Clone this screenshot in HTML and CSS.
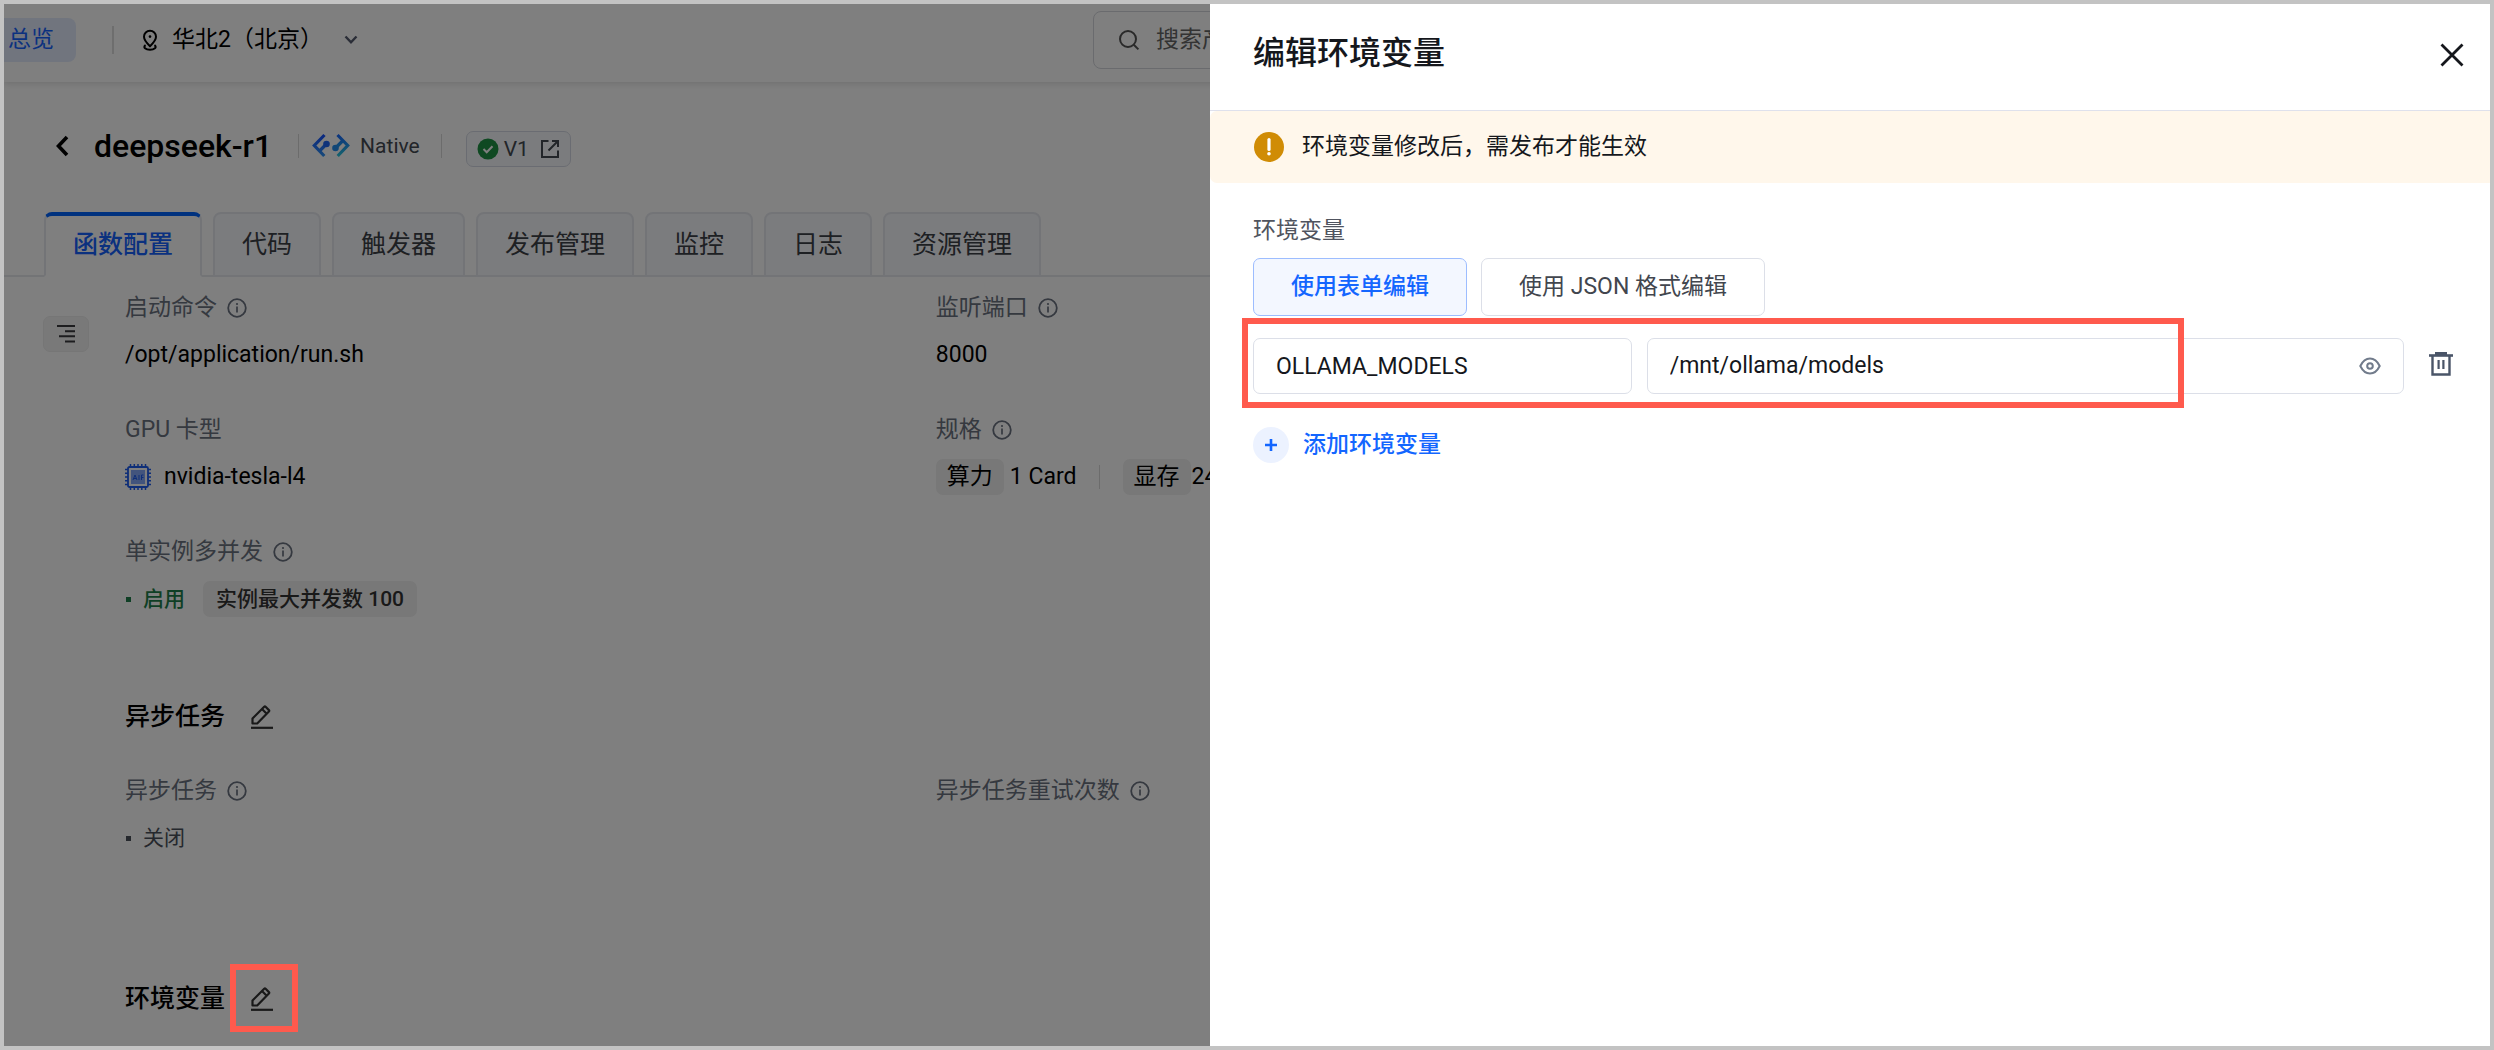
FILE: index.html
```html
<!DOCTYPE html>
<html lang="zh-CN">
<head>
<meta charset="utf-8">
<meta name="viewport" content="width=device-width, initial-scale=1">
<title>编辑环境变量</title>
<link rel="stylesheet" href="styles.css">
</head>
<body>
<svg class="sprite" width="0" height="0" aria-hidden="true">
  <symbol id="info" viewBox="0 0 20 20"><circle cx="10" cy="10" r="8.8" fill="none" stroke="currentColor" stroke-width="1.8"/><path d="M10 8.6v5.8" stroke="currentColor" stroke-width="1.7"/><circle cx="10" cy="6" r="1.1" fill="currentColor"/></symbol>
  <symbol id="edit" viewBox="0 0 22 24"><path d="M1.5 18.5v-5L13.2 1.8a1 1 0 0 1 1.4 0l3.3 3.3a1 1 0 0 1 0 1.4L6.2 18.5zM11 4l4.7 4.7" fill="none" stroke="currentColor" stroke-width="2.2" stroke-linejoin="round"/><path d="M0 22.8h22" stroke="currentColor" stroke-width="2.2"/></symbol>
</svg>
<div class="frame">
  <header class="topbar">
    <div class="topbar-start">
      <a class="overview" href="#">总览</a>
      <button class="region" type="button">
        <svg width="16" height="22" viewBox="0 0 16 22" fill="none" stroke="currentColor" stroke-width="2"><path d="M8 17.2C4 13.4 2 10.8 2 7.8a6 6 0 0 1 12 0c0 3-2 5.600-6 9.400z"/><circle cx="8" cy="7.600" r="1.300" fill="currentColor" stroke="none"/><path d="M3.600 16.200c-3.200 2 .2 4.600 4.400 4.600s7.600-2.600 4.400-4.600"/></svg>
        <span>华北2（北京）</span>
        <svg class="caret" width="14" height="10" viewBox="0 0 14 10" fill="none" stroke="currentColor" stroke-width="2.400"><path d="M1.500 1.500 7 7.300l5.500-5.800"/></svg>
      </button>
    </div>
    <label class="search">
      <svg width="22" height="22" viewBox="0 0 22 22" fill="none" stroke="currentColor" stroke-width="2"><circle cx="10" cy="10" r="8"/><path d="m15.800 15.800 4.600 4.600"/></svg>
      <input type="search" placeholder="搜索产" aria-label="搜索">
    </label>
  </header>

  <main class="page">
    <div class="title-row">
      <button class="back" type="button" aria-label="返回"><svg width="14" height="22" viewBox="0 0 14 22" fill="none" stroke="currentColor" stroke-width="3.600"><path d="M12 2 3.500 11l8.500 9"/></svg></button>
      <h1>deepseek-r1</h1>
      <span class="runtime">
        <svg width="38" height="26" viewBox="0 0 38 26" fill="none" stroke-width="3.200">
          <defs>
            <linearGradient id="gl" x1="0" y1="0" x2="0" y2="1"><stop offset="0" stop-color="#1450ff"/><stop offset="1" stop-color="#2f93f5"/></linearGradient>
            <linearGradient id="gr" x1="0" y1="0" x2="0" y2="1"><stop offset="0" stop-color="#1768ff"/><stop offset="1" stop-color="#2ac6dc"/></linearGradient>
          </defs>
          <path d="M12.500 2 2.300 12.500l10 10.500M7.500 18l6-6" stroke="url(#gl)"/><circle cx="14.500" cy="11" r="3.300" fill="#1e66f5"/>
          <path d="M25.500 2 35.700 12.500l-10 10.500M30.500 8l-6 6" stroke="url(#gr)"/><circle cx="23.500" cy="15" r="3.300" fill="#258fee"/>
        </svg>
        Native
      </span>
      <a class="version" href="#">
        <svg width="22" height="22" viewBox="0 0 22 22"><circle cx="11" cy="11" r="10.500" fill="#1f9245"/><path d="m6.500 11 3.200 3.200 5.800-6" fill="none" stroke="#fff" stroke-width="2"/></svg>
        V1
        <svg class="external" width="20" height="20" viewBox="0 0 20 20" fill="none" stroke="currentColor" stroke-width="2"><path d="M8.500 2H2v16h16v-6.500M12 2h6v6M18 2l-9.500 9.500"/></svg>
      </a>
    </div>

    <nav class="tabs">
      <a class="tab tab-active" href="#">函数配置</a>
      <a class="tab" href="#">代码</a>
      <a class="tab" href="#">触发器</a>
      <a class="tab" href="#">发布管理</a>
      <a class="tab" href="#">监控</a>
      <a class="tab" href="#">日志</a>
      <a class="tab" href="#">资源管理</a>
    </nav>

    <div class="body">
      <button class="outline" type="button" aria-label="目录"><svg width="18" height="18" viewBox="0 0 18 18" stroke="currentColor" stroke-width="2"><path d="M0 1h18M8 6.300h10M2 11.300h16M8 16.500h10"/></svg></button>
      <div class="sections">
        <dl class="details">
          <div class="item">
            <dt>启动命令 <svg class="info"><use href="#info"/></svg></dt>
            <dd>/opt/application/run.sh</dd>
          </div>
          <div class="item">
            <dt>监听端口 <svg class="info"><use href="#info"/></svg></dt>
            <dd>8000</dd>
          </div>
          <div class="item">
            <dt>GPU 卡型</dt>
            <dd class="gpu">
              <svg width="26" height="26" viewBox="0 0 26 26"><path d="M5.500 0v26M9.300 0v26M13 0v26M16.800 0v26M20.500 0v26M0 5.500h26M0 9.300h26M0 13h26M0 16.800h26M0 20.500h26" stroke="#1d5cf0" stroke-width="1.500"/><rect x="3" y="3" width="20" height="20" rx="1.500" fill="#fff" stroke="#1d5cf0" stroke-width="1.800"/><rect x="6" y="6" width="14" height="14" fill="#84a9fa"/><path d="m8 16 2-5 2 5m-3.200-1.500h2.400M14 11v5m2.500 0v-5h2m-2 2.500h2" fill="none" stroke="#1d5cf0"/></svg>
              nvidia-tesla-l4
            </dd>
          </div>
          <div class="item">
            <dt>规格 <svg class="info"><use href="#info"/></svg></dt>
            <dd class="spec">
              <span class="spec-part"><span class="chip">算力</span>1 Card</span>
              <span class="spec-part spec-next"><span class="chip">显存</span>24</span>
            </dd>
          </div>
          <div class="item">
            <dt>单实例多并发 <svg class="info"><use href="#info"/></svg></dt>
            <dd class="state state-on"><span>启用</span><span class="limit">实例最大并发数 100</span></dd>
          </div>
        </dl>

        <section class="section section-async">
          <h2>异步任务 <button class="edit" type="button" aria-label="编辑异步任务"><svg width="22" height="24"><use href="#edit"/></svg></button></h2>
          <dl class="details">
            <div class="item">
              <dt>异步任务 <svg class="info"><use href="#info"/></svg></dt>
              <dd class="state"><span>关闭</span></dd>
            </div>
            <div class="item">
              <dt>异步任务重试次数 <svg class="info"><use href="#info"/></svg></dt>
            </div>
          </dl>
        </section>

        <section class="section">
          <h2>环境变量 <button class="edit edit-marked" type="button" aria-label="编辑环境变量"><svg width="22" height="24"><use href="#edit"/></svg></button></h2>
        </section>
      </div>
    </div>
  </main>

  <div class="mask"></div>

  <aside class="drawer" role="dialog" aria-labelledby="drawer-title">
    <header class="drawer-head">
      <h2 id="drawer-title">编辑环境变量</h2>
      <button class="close" type="button" aria-label="关闭"><svg width="24" height="24" viewBox="0 0 24 24" fill="none" stroke="currentColor" stroke-width="2.800"><path d="m1.500 1.500 21 21m0-21-21 21"/></svg></button>
    </header>
    <p class="notice">
      <svg width="30" height="30" viewBox="0 0 30 30"><circle cx="15" cy="15" r="15" fill="#d08c05"/><path d="M15 7.500v10" stroke="#fff" stroke-width="3.200" stroke-linecap="round"/><circle cx="15" cy="21.800" r="1.800" fill="#fff"/></svg>
      环境变量修改后，需发布才能生效
    </p>
    <form class="form">
      <div class="form-label" id="env-label">环境变量</div>
      <div class="modes" role="group" aria-labelledby="env-label">
        <button class="mode mode-active" type="button">使用表单编辑</button>
        <button class="mode" type="button">使用 JSON 格式编辑</button>
      </div>
      <div class="pair">
        <input class="field" type="text" value="OLLAMA_MODELS" aria-label="变量">
        <div class="field field-value">
          <input type="text" value="/mnt/ollama/models" aria-label="值">
          <button class="eye" type="button" aria-label="显示或隐藏"><svg width="22" height="18" viewBox="0 0 22 18" fill="none" stroke="currentColor" stroke-width="2"><path d="M1.300 9C3.500 4.500 6.800 1.500 11 1.500S18.500 4.500 20.700 9c-2.200 4.500-5.500 7.500-9.700 7.500S3.500 13.500 1.300 9z"/><circle cx="11" cy="9" r="2.800"/></svg></button>
        </div>
        <button class="trash" type="button" aria-label="删除"><svg width="24" height="24" viewBox="0 0 24 24" fill="none" stroke="currentColor"><path d="M0 3.500h24" stroke-width="2.600"/><path d="M6 1.500h12" stroke-width="3"/><path d="M3.500 4v18.500h17V4" stroke-width="2.400"/><path d="M9.600 8v9M14.400 8v9" stroke-width="2.200"/></svg></button>
      </div>
      <button class="add" type="button"><span class="plus"><svg width="14" height="14" viewBox="0 0 14 14" stroke="currentColor" stroke-width="2.600"><path d="M7 1v12M1 7h12"/></svg></span>添加环境变量</button>
    </form>
  </aside>
</div>
</body>
</html>
```
FILE: styles.css
```css
* { box-sizing: border-box; }

body {
  margin: 0;
  color: #000;
  font: 23px/36px Roboto, "Noto Sans CJK SC", sans-serif;
}

h1, h2, p, dl, dd { margin: 0; }
h1, h2 { font-weight: 500; }
a { color: inherit; text-decoration: none; }
svg { flex: none; display: block; }
.sprite { position: absolute; }

button, input { font: inherit; color: inherit; }

button {
  display: flex;
  align-items: center;
  padding: 0;
  border: 0;
  background: none;
  cursor: pointer;
}

input {
  min-width: 0;
  padding: 0;
  border: 0;
  outline: 0;
  background: none;
}

.frame {
  position: relative;
  min-height: 100vh;
  overflow: hidden;
  border: 4px solid #c3c3c3;
  background: #fff;
}

/* Top bar */
.topbar {
  display: grid;
  grid-template-columns: 46fr 59fr;
  align-items: center;
  height: 78px;
  padding-bottom: 7px;
  box-shadow: 0 2px 6px rgba(0, 0, 0, .12);
}

.topbar-start { display: flex; align-items: center; }

.overview {
  padding: 4px 22px 4px 4px;
  border-radius: 0 8px 8px 0;
  background: #e3ebfc;
  color: #1763ff;
}

.region {
  gap: 14px;
  margin-left: 36px;
  padding-left: 30px;
  background: linear-gradient(#dcdcdc, #dcdcdc) no-repeat left / 2px 28px;
}

.caret { margin-left: 7px; color: #555b6e; }

.search {
  display: flex;
  align-items: center;
  gap: 16px;
  height: 58px;
  margin-right: 40px;
  padding: 0 24px;
  border: 1px solid #d4d6dc;
  border-radius: 8px;
  color: #555;
}

.search input { flex: 1; }
.search input::placeholder { color: #666; opacity: 1; }

/* Function title */
.page { padding-top: 36px; }

.title-row {
  display: flex;
  align-items: center;
  height: 56px;
  padding-left: 51px;
}

h1 {
  margin-left: 25px;
  font-size: 32px;
}

.runtime {
  display: flex;
  align-items: center;
  gap: 10px;
  margin-left: 26px;
  padding: 0 22px 0 14px;
  background:
    linear-gradient(#d8d8d8, #d8d8d8) no-repeat left / 1px 24px,
    linear-gradient(#d8d8d8, #d8d8d8) no-repeat right / 1px 24px;
  color: #444a52;
  font-size: 21px;
}

.version {
  display: flex;
  align-items: center;
  gap: 5px;
  height: 36px;
  margin: 6px 0 0 24px;
  padding: 0 10px;
  border: 1px solid #d5d9e4;
  border-radius: 7px;
  background: #f7f9fc;
  color: #444a52;
  font-size: 21px;
}

.external { margin-left: 6px; }

/* Tabs */
.tabs {
  display: flex;
  gap: 11px;
  margin-top: 38px;
  padding-left: 40px;
  background: linear-gradient(#e6e8ec, #e6e8ec) no-repeat bottom / 100% 2px;
}

.tab {
  height: 65px;
  padding: 13px 27px 0;
  border: 2px solid #e6e9ef;
  border-radius: 8px 8px 0 0;
  background: #f6f8fc;
  color: #3c4047;
  font-size: 25px;
}

.tab-active {
  padding-top: 11px;
  border-top: 4px solid #0064ff;
  border-bottom-color: #fff;
  background: #fff;
  color: #1763ff;
  font-weight: 500;
}

/* Details */
.body {
  display: flex;
  align-items: flex-start;
  gap: 36px;
  padding: 13px 0 20px 39px;
}

.outline {
  justify-content: center;
  width: 46px;
  height: 36px;
  margin-top: 26px;
  border: 1px solid #ececec;
  border-radius: 7px;
  background: #f3f3f3;
  color: #3a3a3f;
}

.sections { flex: 1; }

.details {
  display: grid;
  grid-template-columns: 12fr 23fr;
  row-gap: 39px;
}

.item {
  display: grid;
  row-gap: 11px;
  align-content: start;
}

dt {
  display: flex;
  align-items: center;
  gap: 10px;
  color: #6b7280;
}

.info { width: 20px; height: 20px; }

dd { display: flex; align-items: center; }

.gpu { gap: 13px; }

.spec-part { display: flex; gap: 6px; }

.spec-next {
  gap: 1px;
  margin-left: 22px;
  padding-left: 24px;
  background: linear-gradient(#d8d8d8, #d8d8d8) no-repeat left / 1px 24px;
}

.chip, .limit {
  border-radius: 7px;
  background: #f0f0f0;
}

.chip { padding: 0 11px; }

.state {
  gap: 18px;
  color: #4b505a;
  font-size: 21px;
}

.state::before {
  content: "";
  width: 5px;
  height: 5px;
  margin: 0 -6px 0 1px;
  background: currentColor;
}

.state-on { color: #1f7f4a; font-weight: 500; }
.limit { padding: 0 13px; color: #333; }

.section { margin-top: 82px; }
.section-async .details { min-height: 126px; margin-top: 38px; }

.section h2 {
  display: flex;
  align-items: center;
  gap: 26px;
  font-size: 25px;
}

.edit { position: relative; color: #333; }

.edit-marked::after {
  content: "";
  position: absolute;
  z-index: 2;
  inset: -23px -25px -21px -21px;
  border: 6px solid #ff5a4d;
}

.mask {
  position: absolute;
  z-index: 1;
  inset: 0;
  background: rgba(0, 0, 0, .5);
}

/* Drawer */
.drawer {
  position: absolute;
  z-index: 3;
  top: 0;
  right: 0;
  bottom: 0;
  width: calc(50% + 37px);
  background: #fff;
  color: #15171c;
}

.drawer-head {
  display: flex;
  align-items: center;
  justify-content: space-between;
  height: 107px;
  padding: 0 26px 4px 43px;
  border-bottom: 1px solid #dfe1ec;
}

.drawer-head h2 { padding-bottom: 4px; font-size: 32px; }

.notice {
  display: flex;
  align-items: center;
  gap: 18px;
  height: 72px;
  padding-left: 44px;
  border-radius: 7px 0 0 7px;
  background: #fff7eb;
}

.form { padding: 30px 37px 0 43px; }
.form-label { color: #50545e; }

.modes {
  display: flex;
  gap: 14px;
  margin-top: 9px;
}

.mode {
  height: 58px;
  padding: 0 37px;
  border: 1px solid #dcdfe8;
  border-radius: 7px;
  color: #42464e;
}

.mode-active {
  border-color: #9dbdff;
  background: #f3f7ff;
  color: #1366ff;
  font-weight: 500;
}

.pair {
  position: relative;
  display: grid;
  grid-template-columns: 1fr 2fr auto;
  gap: 15px;
  margin-top: 22px;
}

.pair::after {
  content: "";
  position: absolute;
  inset: -20px 269px -14px -11px;
  border: 6px solid #ff5a4d;
  pointer-events: none;
}

.field {
  height: 56px;
  padding: 0 22px;
  border: 1px solid #dcdfe8;
  border-radius: 7px;
}

.field-value {
  display: flex;
  align-items: center;
  gap: 12px;
}

.field-value input { flex: 1; }
.eye { color: #717b8b; }

.trash {
  padding: 0 0 4px 10px;
  color: #4a5568;
}

.add {
  gap: 14px;
  margin-top: 33px;
  color: #1366ff;
  font-weight: 500;
}

.plus {
  display: grid;
  place-items: center;
  width: 36px;
  height: 36px;
  border-radius: 50%;
  background: #ecf2ff;
}
```
